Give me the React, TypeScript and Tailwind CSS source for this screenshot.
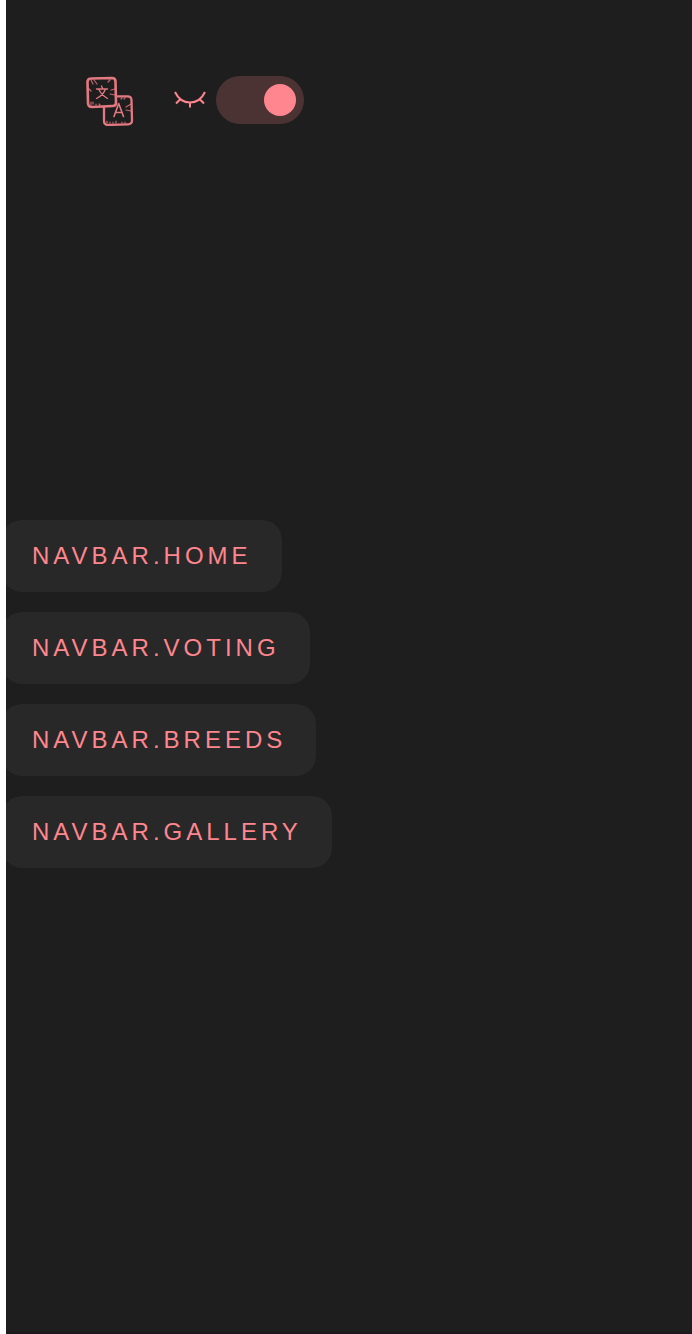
const items = ["HOME", "VOTING", "BREEDS", "GALLERY"];

function LanguageIcon() {
  return (
    <svg className="mt-[2px] h-[50px] w-[48px] shrink-0" viewBox="0 0 48 50" fill="none" stroke="#ff868e" strokeLinecap="round" strokeLinejoin="round">
      <g opacity=".88">
        <path strokeWidth="2.300" d="M18 31.500v13q0 4.500 4 4.500l20-.7q4-.2 4-3.500l-.5-20.500q0-4-4-4h-10" />
        <path strokeWidth="2.600" d="M5 2.500 26 2q3.500 0 3.500 3.500L30 27q0 3-3.500 3L6 31q-4 0-4-4L1.500 6q0-3.500 3.500-3.500Z" />
        <path strokeWidth="1.300" d="M15.500 10l1 2.500M10.500 13h11M19.500 13q-2 6-9 9.500M12.500 13q3 6 9 9.500" />
        <path strokeWidth="1.600" d="m28 40.500 4.700-13L37.500 40.500M29.500 36.500h6.500" />
      </g>
      <path strokeWidth="1.200" opacity=".7" d="M5 4l2 4M8 4l3 4M22 6l2-2M25 14l4-1M24 18l5 1M5 29v-3M7 28v-2M10 29v-1M13 28l1 1M3 13l2 2M21 47v-2M24 47v-1M27 46v1M30 47v-2M36 46v1M39 47v-1M35 23l1-1M38 23l1-1M40 31l5-3M40 34l5 1" />
    </svg>
  );
}

function ClosedEyeIcon() {
  return (
    <svg className="ml-10 h-[18px] w-8 shrink-0" viewBox="0 0 32 18" fill="none" stroke="#ff868e" strokeWidth="2">
      <path d="M1 1Q6 11.500 16 11.500T31 1M6.500 8l-4.500 4.500M16 11.500v5M25.500 8l4.500 4.500" />
    </svg>
  );
}

export default function App() {
  return (
    <div className="min-h-[1334px] w-full bg-white pl-[6px]">
      <main className="flex h-[1334px] flex-col overflow-hidden border-b-2 border-[#1d181d] bg-[#1e1e1e] pt-[76px]">
        <header className="flex h-12 items-center pl-20">
          <LanguageIcon />
          <ClosedEyeIcon />
          <button aria-label="Toggle theme" className="ml-[10px] flex h-12 w-[88px] items-center justify-end rounded-full bg-[#4b3334] pr-2">
            <span className="size-8 rounded-full bg-[#ff868e]" />
          </button>
        </header>
        <nav className="-ml-[4px] mt-[396px] flex flex-col items-start gap-5">
          {items.map((item) => (
            <a key={item} className="flex h-[72px] items-center rounded-[20px] bg-[#282828] px-[30px] font-['Liberation_Sans',sans-serif] text-[24px] leading-none tracking-[4px] text-[#ff868e]">
              NAVBAR.{item}
            </a>
          ))}
        </nav>
      </main>
    </div>
  );
}
